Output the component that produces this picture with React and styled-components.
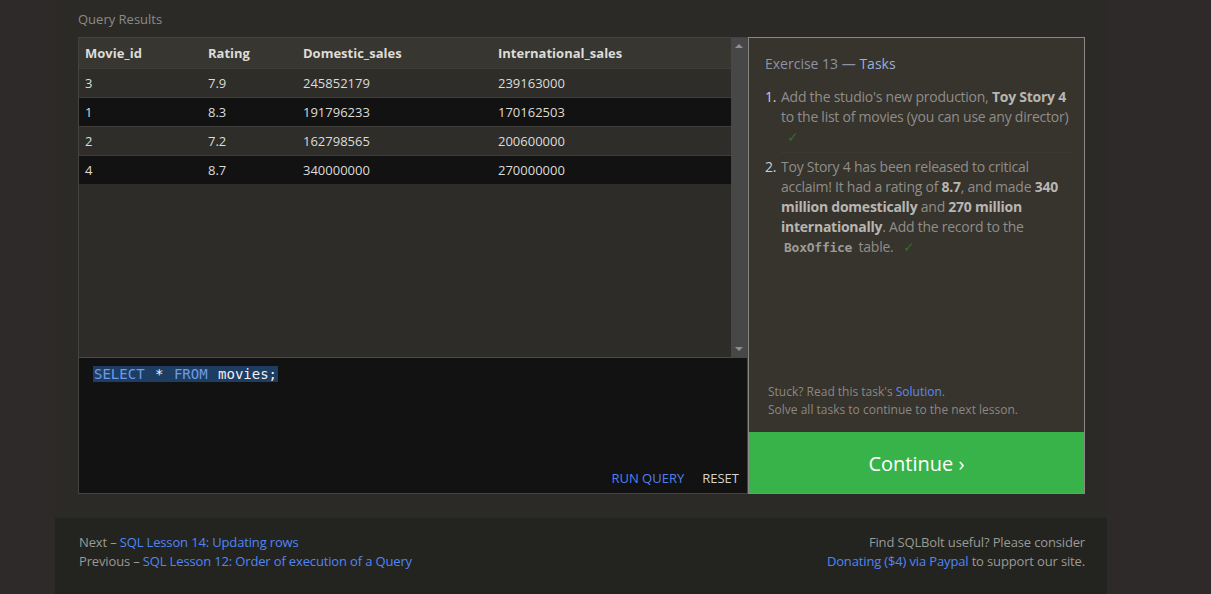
import React from 'react';
import styled, { createGlobalStyle } from 'styled-components';

const GlobalStyle = createGlobalStyle`
  body {
    margin: 0;
    background-color: #2e2a29;
    font-family: "Open Sans", "Noto Sans", sans-serif;
    color: #9a9a95;
  }
`;

const Page = styled.div`
  width: 1052px;
  margin-left: 55px;
  background-color: #2b2a26;
`;

const Content = styled.section`
  padding: 9px 22px 24px 23px;
`;

const Label = styled.div`
  font-size: 13px;
  line-height: 20px;
  color: #8c8b86;
  margin-bottom: 8px;
`;

const Row = styled.div`
  display: flex;
  height: 457px;
`;

const LeftBox = styled.div`
  width: 670px;
  box-sizing: border-box;
  border: 1px solid #444340;
  display: flex;
  flex-direction: column;
`;

const Results = styled.div`
  height: 319px;
  display: flex;
  background-color: #2d2c28;
  border-bottom: 1px solid #4a4945;
`;

const TableWrap = styled.div`
  flex: 1;
`;

const Table = styled.table`
  width: 100%;
  border-collapse: collapse;
  font-size: 13px;
  color: #dcdcd8;
  table-layout: fixed;
`;

const Th = styled.th`
  text-align: left;
  font-weight: 700;
  height: 30px;
  padding: 0 0 0 6px;
  background-color: #383630;
  width: ${p => p.w ? p.w + 'px' : 'auto'};
`;

const Tr = styled.tr`
  background-color: ${p => p.dark ? '#121212' : '#2e2d29'};
  border-top: 1px solid #3e3d39;
`;

const Td = styled.td`
  height: 28px;
  padding: 0 0 0 6px;
`;

const Scrollbar = styled.div`
  width: 16px;
  background-color: #474747;
  display: flex;
  flex-direction: column;
  justify-content: space-between;
  align-items: center;
  padding: 6px 0;
`;

const Arrow = styled.div`
  width: 0;
  height: 0;
  border-left: 4px solid transparent;
  border-right: 4px solid transparent;
  ${p => p.down ? 'border-top: 4px solid #8f8f8f;' : 'border-bottom: 4px solid #8f8f8f;'}
`;

const Editor = styled.div`
  flex: 1;
  background-color: #121212;
  display: flex;
  flex-direction: column;
  justify-content: space-between;
  padding: 7px 8px 6px 14px;
`;

const Code = styled.div`
  font-family: "DejaVu Sans Mono", "Liberation Mono", monospace;
  font-size: 14px;
  line-height: 18px;
`;

const Sel = styled.span`
  background-color: #1d3d62;
  padding: 0 1px;
  color: ${p => p.kw ? '#6f9be6' : '#f0f0f0'};
`;

const Buttons = styled.div`
  display: flex;
  justify-content: flex-end;
  gap: 18px;
  font-size: 13px;
`;

const TextButton = styled.span`
  text-transform: uppercase;
  color: ${p => p.primary ? '#4f80ee' : '#d4d4d0'};
`;

const Panel = styled.div`
  flex: 1;
  box-sizing: border-box;
  background-color: #37332d;
  border: 1px solid #8a8884;
  display: flex;
  flex-direction: column;
`;

const PanelBody = styled.div`
  flex: 1;
  padding: 15px 10px 0 16px;
  display: flex;
  flex-direction: column;
`;

const Title = styled.h3`
  margin: 0 0 12px;
  font-weight: 400;
  font-size: 14px;
  line-height: 22px;
  color: #8c93a3;
  span {
    color: #9ab0d6;
  }
`;

const Tasks = styled.ol`
  margin: 0;
  padding: 0;
  list-style: none;
  font-size: 14px;
  line-height: 20px;
  letter-spacing: -0.25px;
  color: #8f8e89;
`;

const Task = styled.li`
  display: flex;
  padding-bottom: 4px;
`;

const Num = styled.span`
  width: 16px;
  flex-shrink: 0;
  color: #c9cedb;
`;

const TaskText = styled.div`
  flex: 1;
  padding-bottom: ${p => p.first ? '5px' : '0'};
  border-bottom: ${p => p.first ? '1px solid #3c3933' : 'none'};
  b {
    color: #b7b6b1;
  }
`;

const Check = styled.span`
  color: #2f6b32;
  margin-left: ${p => p.m || 0}px;
`;

const Mono = styled.code`
  font-family: "DejaVu Sans Mono", "Liberation Mono", monospace;
  font-weight: 700;
  font-size: 13px;
  color: #9c9b96;
  padding: 0 3px;
`;

const Hint = styled.div`
  margin-top: auto;
  padding: 0 0 13px 3px;
  font-size: 12px;
  line-height: 18px;
  color: #8a8883;
`;

const Link = styled.a`
  color: ${p => p.soft ? '#5a8cf0' : '#4f86f7'};
  text-decoration: none;
`;

const Continue = styled.div`
  height: 60px;
  background-color: #38b34a;
  color: #ffffff;
  font-size: 20px;
  display: flex;
  align-items: center;
  justify-content: center;
  padding-top: 1px;
`;

const Footer = styled.footer`
  background-color: #232320;
  padding: 15px 22px 23px 24px;
  display: flex;
  justify-content: space-between;
  font-size: 13px;
  line-height: 19px;
  letter-spacing: -0.15px;
  color: #9a9a95;
  min-height: 38px;
`;

const FooterCol = styled.div`
  text-align: ${p => p.right ? 'right' : 'left'};
`;

const rows = [
  ['3', '7.9', '245852179', '239163000'],
  ['1', '8.3', '191796233', '170162503'],
  ['2', '7.2', '162798565', '200600000'],
  ['4', '8.7', '340000000', '270000000'],
];

export default function App() {
  return (
    <>
      <GlobalStyle />
      <Page>
        <Content>
          <Label>Query Results</Label>
          <Row>
            <LeftBox>
              <Results>
                <TableWrap>
                  <Table>
                    <thead>
                      <tr>
                        <Th w={117}>Movie_id</Th>
                        <Th w={89}>Rating</Th>
                        <Th w={189}>Domestic_sales</Th>
                        <Th>International_sales</Th>
                      </tr>
                    </thead>
                    <tbody>
                      {rows.map((r, i) => (
                        <Tr key={i} dark={i % 2 === 1}>
                          {r.map((c, j) => <Td key={j}>{c}</Td>)}
                        </Tr>
                      ))}
                    </tbody>
                  </Table>
                </TableWrap>
                <Scrollbar>
                  <Arrow />
                  <Arrow down />
                </Scrollbar>
              </Results>
              <Editor>
                <Code>
                  <Sel kw>SELECT</Sel><Sel> * </Sel><Sel kw>FROM</Sel><Sel> movies;</Sel>
                </Code>
                <Buttons>
                  <TextButton primary>Run Query</TextButton>
                  <TextButton>Reset</TextButton>
                </Buttons>
              </Editor>
            </LeftBox>
            <Panel>
              <PanelBody>
                <Title>Exercise 13 — <span>Tasks</span></Title>
                <Tasks>
                  <Task>
                    <Num>1.</Num>
                    <TaskText first>
                      Add the studio's new production, <b>Toy Story 4</b> to the list of movies (you can use any director)
                      <br /><Check m={6}>✓</Check>
                    </TaskText>
                  </Task>
                  <Task>
                    <Num>2.</Num>
                    <TaskText>
                      Toy Story 4 has been released to critical acclaim! It had a rating of <b>8.7</b>, and made <b>340 million domestically</b> and <b>270 million internationally</b>. Add the record to the <Mono>BoxOffice</Mono> table. <Check m={6}>✓</Check>
                    </TaskText>
                  </Task>
                </Tasks>
                <Hint>
                  Stuck? Read this task's <Link soft href="#">Solution</Link>.<br />
                  Solve all tasks to continue to the next lesson.
                </Hint>
              </PanelBody>
              <Continue>Continue ›</Continue>
            </Panel>
          </Row>
        </Content>
        <Footer>
          <FooterCol>
            Next – <Link href="#">SQL Lesson 14: Updating rows</Link><br />
            Previous – <Link href="#">SQL Lesson 12: Order of execution of a Query</Link>
          </FooterCol>
          <FooterCol right>
            Find SQLBolt useful? Please consider<br />
            <Link href="#">Donating ($4) via Paypal</Link> to support our site.
          </FooterCol>
        </Footer>
      </Page>
    </>
  );
}
